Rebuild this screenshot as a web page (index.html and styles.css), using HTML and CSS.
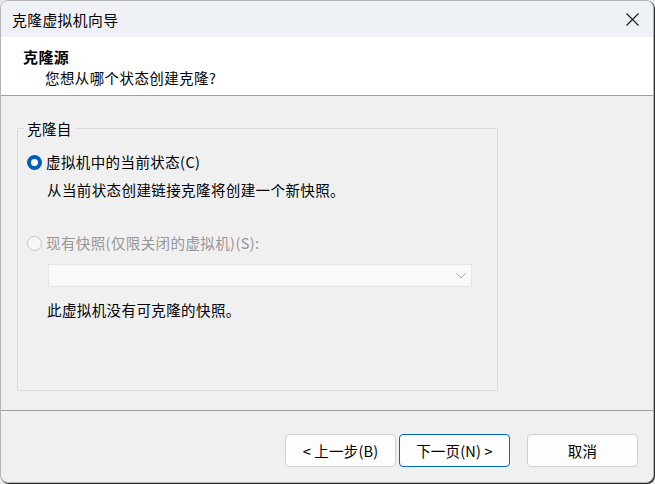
FILE: index.html
```html
<!DOCTYPE html>
<html lang="zh-CN">
<head>
<meta charset="utf-8">
<title>克隆虚拟机向导</title>
<link rel="stylesheet" href="styles.css">
</head>
<body>
<div class="window">
  <div class="titlebar">
    <span class="title">克隆虚拟机向导</span>
    <svg class="close" width="13" height="13" viewBox="0 0 13 13"><path d="M0.5 0.5 L12.5 12.5 M12.5 0.5 L0.5 12.5" stroke="#1a1a1a" stroke-width="1.1" fill="none"/></svg>
  </div>
  <div class="header">
    <div class="header-title">克隆源</div>
    <div class="header-sub">您想从哪个状态创建克隆?</div>
  </div>
  <div class="content">
    <fieldset class="group">
      <legend class="legend">克隆自</legend>
      <div class="option">
        <span class="radio checked"></span>
        <span class="label">虚拟机中的当前状态(C)</span>
      </div>
      <div class="desc">从当前状态创建链接克隆将创建一个新快照。</div>
      <div class="option option-disabled">
        <span class="radio"></span>
        <span class="label">现有快照(仅限关闭的虚拟机)(S):</span>
      </div>
      <div class="select">
        <svg class="chevron" width="10" height="6" viewBox="0 0 10 6"><path d="M0.5 0.5 L5 5 L9.5 0.5" stroke="#a8a8a8" stroke-width="1" fill="none"/></svg>
      </div>
      <div class="note">此虚拟机没有可克隆的快照。</div>
    </fieldset>
  </div>
  <div class="footer">
    <button class="btn">&lt; 上一步(B)</button>
    <button class="btn btn-primary">下一页(N) &gt;</button>
    <button class="btn btn-cancel">取消</button>
  </div>
</div>
</body>
</html>
```
FILE: styles.css
```css
html, body {
  margin: 0;
  padding: 0;
}
body {
  width: 655px;
  height: 484px;
  background: #e9e9e9;
  font-family: "Noto Sans CJK SC", "Noto Sans", sans-serif;
  font-size: 14.5px;
  letter-spacing: 0.4px;
  color: #000;
  overflow: hidden;
}
.window {
  box-sizing: border-box;
  width: 654px;
  height: 483px;
  border: 1px solid #b4b4b4;
  border-radius: 8px;
  box-shadow: 1px 1px 0 #2a2a2a;
  background: #f0f0f0;
  display: flex;
  flex-direction: column;
  overflow: hidden;
}
.titlebar {
  height: 36px;
  background: #eef2f7;
  display: flex;
  align-items: center;
  justify-content: space-between;
  padding: 0 14px 0 11px;
  flex: none;
}
.title {
  font-size: 14.8px;
  line-height: 20px;
  padding-top: 1px;
}
.close {
  display: block;
  margin-top: 1px;
}
.header {
  height: 58px;
  background: #fff;
  border-bottom: 1px solid #a0a0a0;
  padding-left: 22px;
  box-sizing: content-box;
  flex: none;
}
.header-title {
  font-weight: bold;
  font-size: 15px;
  line-height: 20px;
  margin-top: 10px;
}
.header-sub {
  line-height: 20px;
  margin-top: 1px;
  padding-left: 22px;
}
.content {
  flex: 1;
  display: flex;
  flex-direction: column;
  padding: 22px 0 19px 16px;
  min-height: 0;
}
.group {
  box-sizing: border-box;
  flex: 1;
  width: 481px;
  margin: 0;
  padding: 0 0 0 9px;
  border: 1px solid #dcdcdc;
  min-width: 0;
}
.legend {
  margin-left: -3px;
  padding: 0 3px;
  line-height: 20px;
  position: relative;
  top: 1px;
}
.option {
  display: flex;
  align-items: center;
  height: 20px;
  margin-top: 14px;
}
.option-disabled {
  margin-top: 33px;
  color: #969696;
}
.radio {
  box-sizing: border-box;
  width: 15px;
  height: 15px;
  border-radius: 50%;
  border: 1px solid #c4c4c4;
  background: #f7f7f7;
  margin-right: 4px;
  flex: none;
}
.radio.checked {
  border: 4.5px solid #005fb8;
  background: #fff;
}
.label {
  line-height: 20px;
}
.desc {
  line-height: 20px;
  margin-top: 8px;
  padding-left: 20px;
}
.select {
  box-sizing: border-box;
  width: 424px;
  height: 23px;
  margin: 11px 0 0 21px;
  background: #f9f9f9;
  border: 1px solid #e6e6e6;
  display: flex;
  align-items: center;
  justify-content: flex-end;
  padding-right: 5px;
}
.chevron {
  display: block;
}
.note {
  line-height: 20px;
  margin-top: 13px;
  padding-left: 20px;
}
.footer {
  flex: none;
  height: 48px;
  border-top: 1px solid #a0a0a0;
  display: flex;
  justify-content: flex-end;
  align-items: flex-start;
  padding: 23px 15px 0 0;
  gap: 3px;
}
.btn {
  box-sizing: border-box;
  width: 111px;
  height: 33px;
  background: #fdfdfd;
  border: 1px solid #d0d0d0;
  border-radius: 4px;
  font-family: "Noto Sans CJK SC", "Noto Sans", sans-serif;
  font-size: 14.5px;
  letter-spacing: 0.2px;
  color: #000;
  padding: 0;
  line-height: 20px;
}
.btn-primary {
  border-color: #0067c0;
}
.btn-cancel {
  margin-left: 14px;
}
```
